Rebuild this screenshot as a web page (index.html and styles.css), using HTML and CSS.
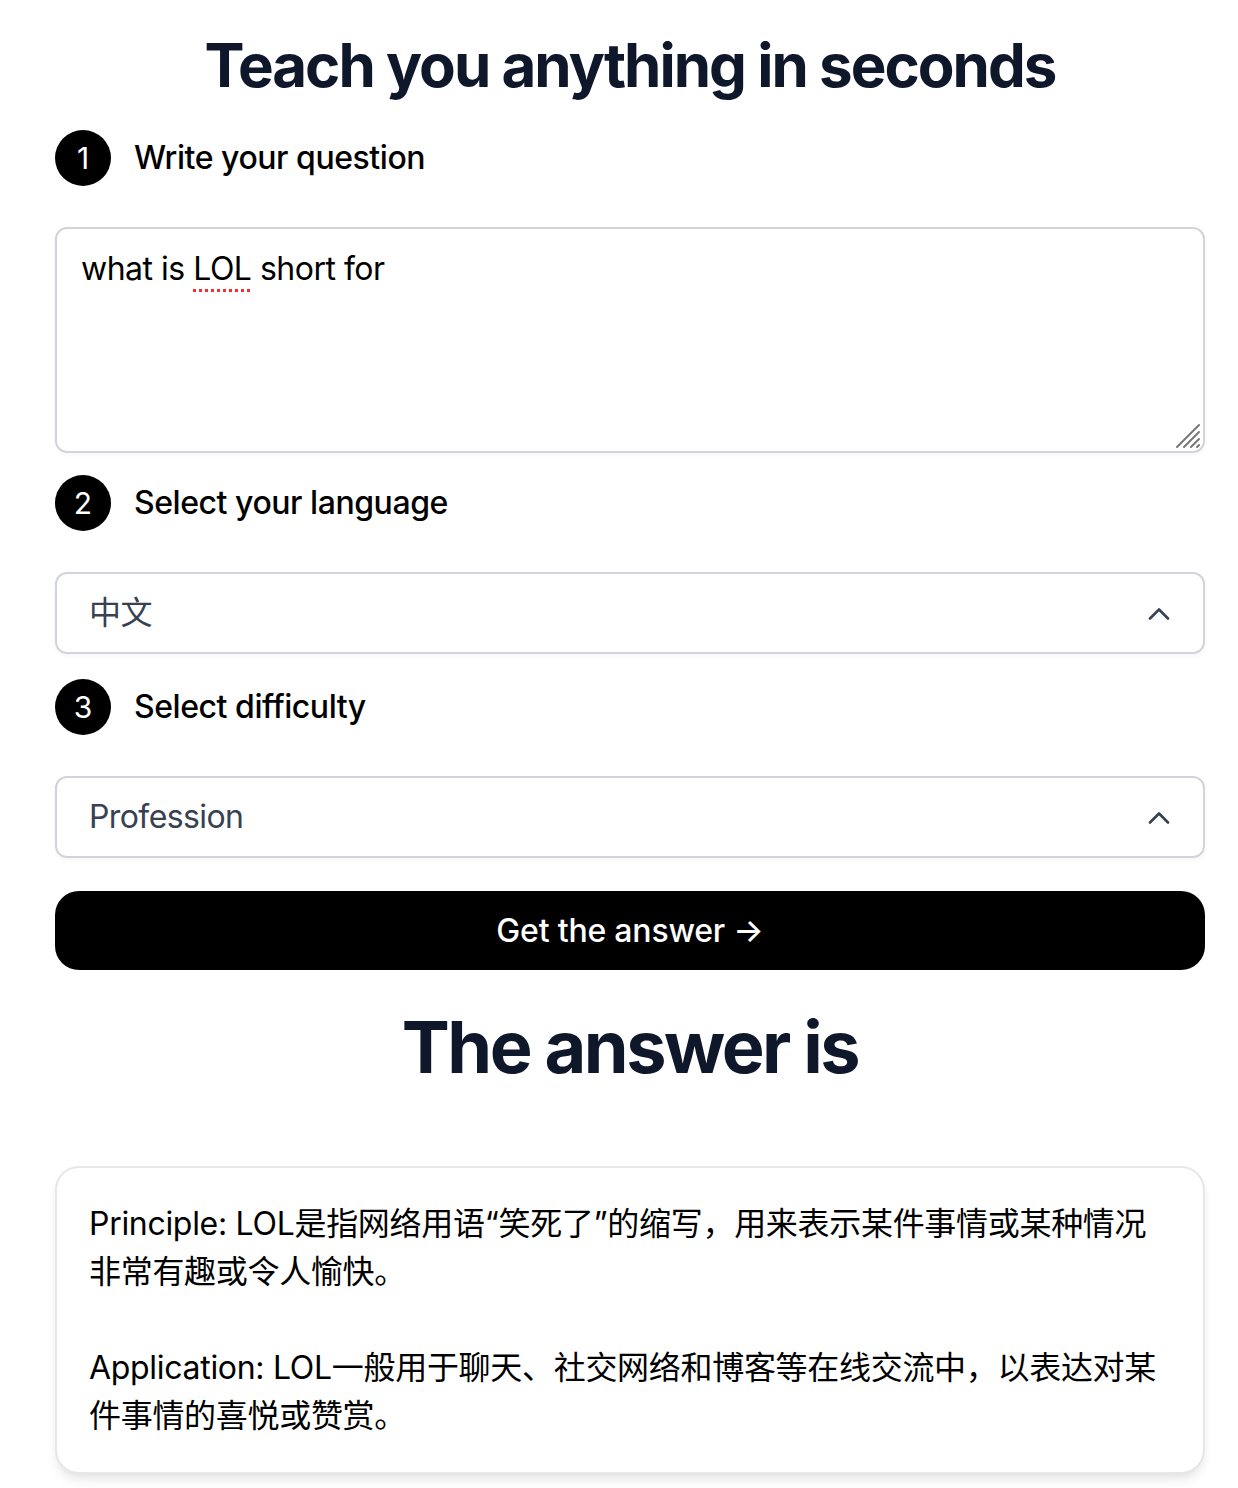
FILE: index.html
```html
<!DOCTYPE html>
<html lang="en">
<head>
<meta charset="utf-8">
<title>Teach you anything in seconds</title>
<link rel="stylesheet" href="styles.css">
</head>
<body>
<main class="page">
  <h1 class="title">Teach you anything in seconds</h1>

  <div class="step step-first">
    <span class="step-num">1</span>
    <span class="step-label">Write your question</span>
  </div>
  <div class="question" role="textbox">
    <span>what is <span class="misspelled">LOL</span> short for</span>
    <svg class="resize" width="26" height="26" viewBox="0 0 26 26" aria-hidden="true">
      <path d="M2 24 L24 2 M9 24 L24 9 M16 24 L24 16 M22 24 L24 22" stroke="#777" stroke-width="2" stroke-linecap="round" fill="none"/>
    </svg>
  </div>

  <div class="step step-second">
    <span class="step-num">2</span>
    <span class="step-label">Select your language</span>
  </div>
  <div class="select select-lang">
    <span class="select-value">中文</span>
    <svg class="chevron" width="22" height="13" viewBox="0 0 22 13" aria-hidden="true">
      <path d="M2 11.5 L11 2.5 L20 11.5" stroke="#374151" stroke-width="2.6" stroke-linecap="round" stroke-linejoin="round" fill="none"/>
    </svg>
  </div>

  <div class="step step-third">
    <span class="step-num">3</span>
    <span class="step-label">Select difficulty</span>
  </div>
  <div class="select select-diff">
    <span class="select-value">Profession</span>
    <svg class="chevron" width="22" height="13" viewBox="0 0 22 13" aria-hidden="true">
      <path d="M2 11.5 L11 2.5 L20 11.5" stroke="#374151" stroke-width="2.6" stroke-linecap="round" stroke-linejoin="round" fill="none"/>
    </svg>
  </div>

  <button class="submit" type="button">Get the answer →</button>

  <h2 class="answer-title">The answer is</h2>

  <div class="answer-card">
    <p class="answer-text">Principle: LOL是指网络用语“笑死了”的缩写，用来表示某件事情或某种情况<br>非常有趣或令人愉快。<br><br>Application: LOL一般用于聊天、社交网络和博客等在线交流中，以表达对某<br>件事情的喜悦或赞赏。</p>
  </div>
</main>
</body>
</html>
```

FILE: styles.css
```css
* {
  box-sizing: border-box;
}

body {
  margin: 0;
  background: #ffffff;
  font-family: "Inter", "Noto Sans CJK SC", sans-serif;
  color: #000000;
}

.page {
  width: 1150px;
  margin-left: 55px;
  padding-top: 29px;
  padding-bottom: 16px;
}

.title {
  margin: 0;
  text-align: center;
  font-size: 60px;
  line-height: 72px;
  font-weight: 700;
  letter-spacing: -0.033em;
  color: #0f172a;
}

.step {
  display: flex;
  align-items: center;
  gap: 23px;
  height: 56px;
}

.step-first {
  margin-top: 29px;
}

.step-second {
  margin-top: 22px;
}

.step-third {
  margin-top: 25px;
}

.step-num {
  width: 56px;
  height: 56px;
  border-radius: 50%;
  background: #000000;
  color: #ffffff;
  display: flex;
  align-items: center;
  justify-content: center;
  font-size: 30px;
  font-weight: 400;
}

.step-label {
  font-size: 32px;
  line-height: 48px;
  font-weight: 500;
  letter-spacing: -0.45px;
  color: #000000;
}

.question {
  position: relative;
  margin-top: 41px;
  height: 226px;
  border: 2px solid #d1d5db;
  border-radius: 12px;
  padding: 16px 24px;
  font-size: 32px;
  line-height: 48px;
  letter-spacing: -0.5px;
  color: #000000;
  box-shadow: 0 2px 4px rgba(0, 0, 0, 0.04);
}

.misspelled {
  text-decoration: underline dotted #ff2a2a;
  text-decoration-thickness: 3px;
  text-underline-offset: 9px;
}

.resize {
  position: absolute;
  right: 2px;
  bottom: 2px;
}

.select {
  margin-top: 41px;
  height: 82px;
  border: 2px solid #d1d5db;
  border-radius: 12px;
  padding: 0 33px 0 32px;
  display: flex;
  align-items: center;
  justify-content: space-between;
  box-shadow: 0 2px 4px rgba(0, 0, 0, 0.04);
}

.select-value {
  font-size: 32px;
  line-height: 48px;
  letter-spacing: -0.6px;
  color: #374151;
}

.submit {
  display: block;
  width: 100%;
  margin-top: 33px;
  height: 79px;
  border: none;
  border-radius: 24px;
  background: #000000;
  color: #ffffff;
  font-family: "Inter", sans-serif;
  font-size: 32px;
  font-weight: 500;
  letter-spacing: -0.2px;
  cursor: pointer;
}

.answer-title {
  margin: 41px 0 0;
  text-align: center;
  font-size: 72px;
  line-height: 72px;
  font-weight: 700;
  letter-spacing: -0.035em;
  color: #0f172a;
}

.answer-card {
  margin-top: 83px;
  border: 2px solid #e5e7eb;
  border-radius: 24px;
  padding: 32px;
  background: #ffffff;
  box-shadow: 0 8px 12px -2px rgba(0, 0, 0, 0.08), 0 4px 8px -4px rgba(0, 0, 0, 0.08);
}

.answer-text {
  margin: 0;
  font-size: 32px;
  line-height: 48px;
  letter-spacing: -0.3px;
  color: #000000;
  white-space: nowrap;
}
```
